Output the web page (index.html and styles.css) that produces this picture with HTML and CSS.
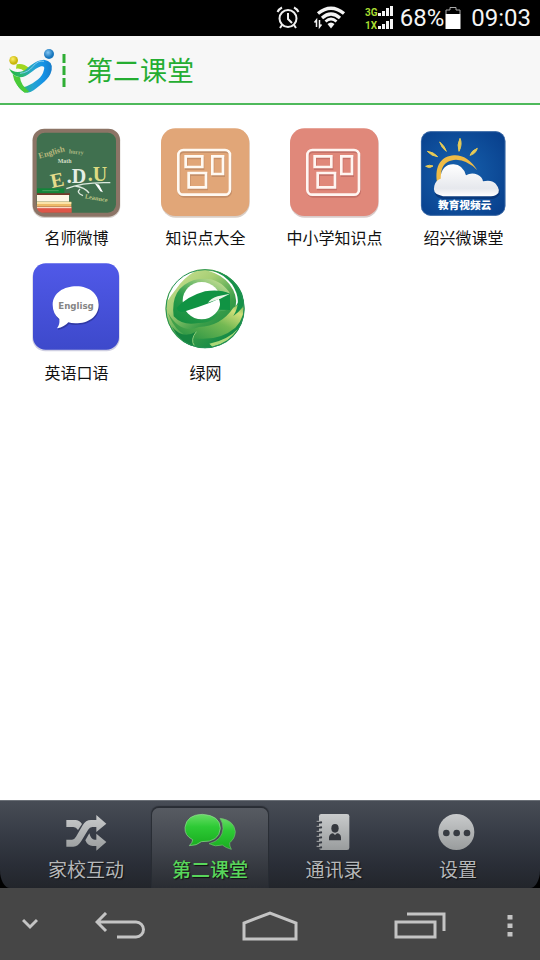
FILE: index.html
```html
<!DOCTYPE html>
<html lang="zh-CN">
<head>
  <meta charset="UTF-8">
  <meta name="viewport" content="width=device-width, initial-scale=1.0">
  <title>第二课堂</title>
  <link rel="stylesheet" href="styles.css">
</head>
<body>
  <div class="status-bar">
    <svg class="status-alarm" width="24" height="24" viewBox="0 0 24 24" fill="none" stroke="#eee" stroke-width="2">
      <circle cx="12" cy="12.500" r="8.500"/>
      <path d="M12 7v6l4 4M1.500 6Q3 3 6 1.500M22.500 6Q21 3 18 1.500M6 19l-2 3M18 19l2 3"/>
    </svg>
    <svg class="status-wifi" width="34" height="24" viewBox="0 0 34 24" fill="none" stroke="#f4f4f4">
      <path d="M5 7.500Q18 -3 31 7.500" stroke-width="3.400"/>
      <path d="M9 12Q18 4 27 12" stroke-width="3.200"/>
      <path d="M12.500 15.500Q18 10.500 23.500 15.500" stroke-width="2.800"/>
      <path d="M14.500 18Q18 15 21.500 18L18 22.500z" fill="#f4f4f4" stroke="none"/>
      <path d="M3.500 21v-7l-2 2.500M6.500 14v7l2-2.500" stroke-width="1.500"/>
    </svg>
    <svg class="status-signal" width="28" height="26" viewBox="0 0 28 26">
      <g class="signal-text"><text x="0" y="11">3G</text><text x="0" y="24">1X</text></g>
      <path fill="#f4f4f4" d="M13 8h3v3h-3zM17 6h3v5h-3zM21 3h3v8h-3zM25 1h3v10h-3zM13 21h3v3h-3zM17 19h3v5h-3zM21 16h3v8h-3zM25 14h3v10h-3z"/>
    </svg>
    <span class="battery-text">68%</span>
    <svg class="status-battery" width="16" height="24" viewBox="0 0 16 24">
      <path d="M1 8V4h4V1.500h6V4h4v4" fill="none" stroke="#aaa"/>
      <path d="M.500 8h15v15H.500z" fill="#fff"/>
    </svg>
    <time>09:03</time>
  </div>

  <header class="title-bar">
    <svg class="logo" width="48" height="48" viewBox="24 30 144 144" role="img" aria-label="logo">
      <defs>
        <linearGradient id="heart" x1="0" y1="0" x2="1" y2="0">
          <stop offset="0" stop-color="#1fb53d"/><stop offset=".300" stop-color="#2bb870"/><stop offset=".550" stop-color="#25a5d0"/><stop offset=".8" stop-color="#1592e6"/><stop offset="1" stop-color="#167cc9"/>
        </linearGradient>
        <radialGradient id="blueBall" cx=".4" cy=".35">
          <stop offset="0" stop-color="#84c6f2"/><stop offset="1" stop-color="#1876bd"/>
        </radialGradient>
        <radialGradient id="yellowBall" cx=".4" cy=".35">
          <stop offset="0" stop-color="#fff06a"/><stop offset="1" stop-color="#c9b70b"/>
        </radialGradient>
      </defs>
      <path d="M50 82Q70 77 88 94L75 104Q62 92 48 95z" fill="#a0d61f"/>
      <path d="M27 94Q45 112 72 101C92 87 105 69 132 68Q160 72 155 99C149 128 122 142 101 160Q88 170 74 166Q58 157 50 141Q66 154 80 148C105 136 128 120 131 101Q137 86 123 88C99 96 84 121 60 121Q37 118 27 94z" fill="url(#heart)"/>
      <path d="M38 112Q43 145 74 167L88 164Q62 145 60 121Q46 119 38 112z" fill="#4acb38"/>
      <path d="M60 109Q84 107 99 88T132 73" fill="none" stroke="#83cbef" stroke-width="3"/>
      <circle cx="147" cy="51" r="15" fill="url(#blueBall)"/>
      <circle cx="41" cy="70" r="13" fill="url(#yellowBall)"/>
    </svg>
    <svg class="divider" width="4" height="34" viewBox="0 0 4 34"><path d="M2 0v34" stroke="#2fae35" stroke-width="3" stroke-dasharray="9 3"/></svg>
    <h1>第二课堂</h1>
  </header>

  <main class="app-grid">
    <a class="app" href="#weibo">
      <svg class="app-icon" viewBox="36 24 270 270">
        <rect x="37" y="27" width="264" height="267" rx="36" fill="#d5cfca"/>
        <rect x="38" y="26" width="262" height="264" rx="35" fill="#8c7466"/>
        <rect x="50" y="38" width="238" height="240" rx="25" fill="#40704f"/>
        <g class="chalk">
          <text x="58" y="116" transform="rotate(-16 58 116)" font-size="25" fill="#b7b67c">English</text>
          <text x="146" y="100" transform="rotate(5 146 100)" font-size="18" fill="#a8b984">hurry</text>
          <text x="113" y="128" font-size="18" fill="#d4dfc8">Math</text>
          <text x="96" y="204" transform="rotate(-12 96 204)" font-size="60" fill="#e4dc8b">E</text>
          <text x="140" y="188" font-size="60" fill="#e5eee5">.D</text>
          <text x="203" y="182" font-size="60" fill="#dcdb81">.U</text>
          <text x="194" y="235" transform="rotate(10 194 235)" font-size="19" fill="#bfc785">Leannce</text>
        </g>
        <path d="M139 206Q190 185 271 188M166 198Q194 202 207 219M180 207q-13 11 9 20" fill="none" stroke="#dce9de" stroke-width="4"/>
        <path d="M224 190l13 4 12 23-8-3z" fill="#fff"/>
        <path d="M51 205h82v15H51z" fill="#138438"/><path d="M67 212h49" stroke="#67b276" stroke-width="2"/>
        <path d="M51 220h99v5H51z" fill="#733928"/><path d="M51 225h96v20H51z" fill="#fff6e5"/>
        <path d="M51 245h103v15H51z" fill="#edba68"/><path d="M51 249h103" stroke="#fff0bf" stroke-width="4"/>
        <path d="M51 260h104v18H66Q54 276 51 264z" fill="#df5548"/><path d="M51 263h103" stroke="#fff2db" stroke-width="3"/>
      </svg>
      <span>名师微博</span>
    </a>
    <a class="app" href="#knowledge">
      <svg class="app-icon" viewBox="33 24 270 270">
        <rect x="34" y="28" width="265" height="265" rx="43" fill="#d9cec6"/>
        <rect x="33" y="25" width="265" height="263" rx="43" fill="#e1a678"/>
        <g fill="none" stroke="#c58f68" stroke-width="8" transform="translate(2 5)"><rect x="85" y="90" width="155" height="134" rx="15"/><path d="M107 109h50v32h-50zM187 109h32v53h-32zM116 159h52v43h-52z"/></g>
        <g fill="none" stroke="#fff9f2" stroke-width="8"><rect x="85" y="90" width="155" height="134" rx="15"/><path d="M107 109h50v32h-50zM187 109h32v53h-32zM116 159h52v43h-52z"/></g>
      </svg>
      <span>知识点大全</span>
    </a>
    <a class="app" href="#school">
      <svg class="app-icon" viewBox="30 24 270 270">
        <rect x="31" y="28" width="265" height="265" rx="43" fill="#d9cbca"/>
        <rect x="30" y="25" width="265" height="263" rx="43" fill="#e0887a"/>
        <g fill="none" stroke="#c57168" stroke-width="8" transform="translate(2 5)"><rect x="82" y="90" width="155" height="134" rx="15"/><path d="M104 109h50v32h-50zM184 109h32v53h-32zM113 159h52v43h-52z"/></g>
        <g fill="none" stroke="#fff5f1" stroke-width="8"><rect x="82" y="90" width="155" height="134" rx="15"/><path d="M104 109h50v32h-50zM184 109h32v53h-32zM113 159h52v43h-52z"/></g>
      </svg>
      <span>中小学知识点</span>
    </a>
    <a class="app" href="#shaoxing">
      <svg class="app-icon" viewBox="27 24 270 270">
        <defs>
          <radialGradient id="sky" cx=".45" cy=".5" r=".7"><stop offset="0" stop-color="#1762ae"/><stop offset="1" stop-color="#083f8c"/></radialGradient>
          <linearGradient id="cloud" x1="0" y1="0" x2="0" y2="1"><stop offset="0" stop-color="#fff"/><stop offset=".75" stop-color="#e6e8ed"/><stop offset="1" stop-color="#fff"/></linearGradient>
        </defs>
        <rect x="33" y="34" width="253" height="253" rx="29" fill="url(#sky)"/>
        <rect x="34" y="35" width="251" height="251" rx="28" fill="none" stroke="#4e79af" stroke-width="2"/>
        <path d="M81 187C73 135 96 108 132 106Q172 104 202 151Q172 119 138 119C99 121 89 150 96 177z" fill="#eebb46"/>
        <path d="M89 66Q104 77 109 94Q95 85 89 66zM150 55Q158 72 147 94Q140 75 150 55zM202 85Q197 102 180 106Q185 91 202 85zM52 94Q71 96 83 110Q65 109 52 94zM47 139Q58 133 69 138Q59 147 47 139z" fill="#e6ca57" stroke="#e6ca57" stroke-width="3"/>
        <path d="M88 229Q67 223 73 197Q77 181 92 176C92 145 110 132 131 133Q158 134 168 166Q184 156 203 164Q217 170 219 184Q244 178 257 191Q276 214 259 224Q252 231 235 231H99z" fill="#062c67" transform="translate(3 6)" opacity=".6"/>
        <path d="M88 225Q67 219 73 197Q77 181 92 176C92 145 110 132 131 133Q158 134 168 166Q184 156 203 164Q217 170 219 184Q244 178 257 191Q276 214 259 224Q252 229 235 229H99z" fill="url(#cloud)"/>
        <text class="cloud-text" x="164" y="267" text-anchor="middle">教育视频云</text>
      </svg>
      <span>绍兴微课堂</span>
    </a>
    <a class="app" href="#english">
      <svg class="app-icon" viewBox="36 24 270 270">
        <defs><linearGradient id="talk" x1="0" y1="0" x2="0" y2="1"><stop offset="0" stop-color="#5059e8"/><stop offset="1" stop-color="#3d49cb"/></linearGradient></defs>
        <rect x="37" y="29" width="262" height="260" rx="39" fill="#cfcfe2"/>
        <rect x="39" y="25" width="258" height="259" rx="38" fill="url(#talk)"/>
        <path d="M118 192Q98 176 98 149C99 113 132 94 169 94C209 94 236 118 236 149C236 184 206 205 166 205Q154 205 145 202Q134 216 111 220Q120 209 118 192z" fill="#3039a5" transform="translate(2 5)"/>
        <path d="M118 192Q98 176 98 149C99 113 132 94 169 94C209 94 236 118 236 149C236 184 206 205 166 205Q154 205 145 202Q134 216 111 220Q120 209 118 192z" fill="#fff"/>
        <text class="english-text" x="168" y="162" text-anchor="middle">Englisg</text>
      </svg>
      <span>英语口语</span>
    </a>
    <a class="app" href="#green">
      <svg class="app-icon" viewBox="33 24 270 270">
        <defs>
          <linearGradient id="globe" x1="0" y1="0" x2=".8" y2="1"><stop offset="0" stop-color="#d5e69b"/><stop offset=".35" stop-color="#a6ce74"/><stop offset=".65" stop-color="#3a9d48"/><stop offset="1" stop-color="#078445"/></linearGradient>
          <linearGradient id="letter" x1="0" y1="1" x2=".7" y2="0"><stop offset="0" stop-color="#128b3d"/><stop offset=".5" stop-color="#2c9d4c"/><stop offset="1" stop-color="#b9d98d"/></linearGradient>
          <linearGradient id="swoosh" x1="0" y1="1" x2="1" y2="0"><stop offset="0" stop-color="#178b41"/><stop offset=".55" stop-color="#74b953"/><stop offset=".8" stop-color="#d1df79"/><stop offset="1" stop-color="#4ca64c"/></linearGradient>
        </defs>
        <circle cx="165" cy="161" r="119" fill="url(#globe)"/>
        <path d="M53 137Q62 62 138 47Q101 68 79 101Q65 118 53 137z" fill="#fff"/>
        <path d="M71 184Q60 99 132 75Q201 58 238 112L239 162Q223 168 210 169Q193 205 145 204Q99 214 71 184z" fill="url(#letter)"/>
        <path d="M54 173Q92 239 147 216Q213 213 250 158L280 138Q289 183 256 218Q211 256 145 251Q78 245 54 173z" fill="url(#swoosh)"/>
        <ellipse cx="155" cy="137" rx="57" ry="56" fill="#fff"/>
        <path d="M80 159Q111 124 165 109Q208 101 240 116Q214 128 180 143Q143 157 110 167Q87 178 80 159z" fill="#109343"/>
        <path d="M206 130L240 116V165L207 164Q214 149 206 130z" fill="#109343"/>
        <path d="M203 124L240 116L211 131Q190 137 174 143Q181 131 203 124z" fill="#e8f5e6"/>
        <path d="M66 215Q98 254 138 230Q120 258 131 274Q89 263 66 215z" fill="#16843f"/>
        <path d="M139 230Q120 254 133 272" fill="none" stroke="#8ccb77" stroke-width="3"/>
        <path d="M178 266Q231 257 266 220Q240 264 187 275z" fill="#acd878"/>
        <path d="M174 47Q247 56 270 110Q276 129 257 154Q264 121 238 87Q216 59 174 47z" fill="#fff"/>
        <path d="M184 45Q252 60 276 115Q284 138 278 157Q265 173 250 183Q279 139 246 88Q221 57 184 45z" fill="#159148"/>
        <circle cx="165" cy="161" r="117" fill="none" stroke="#249256" stroke-width="3"/>
      </svg>
      <span>绿网</span>
    </a>
  </main>

  <!-- svg gradient shared by the grey tab icons -->
  <svg class="defs" width="0" height="0">
    <linearGradient id="silver" x1="0" y1="0" x2="0" y2="1"><stop offset="0" stop-color="#c9cbcc"/><stop offset="1" stop-color="#999c9d"/></linearGradient>
    <linearGradient id="bubble" x1="0" y1="0" x2="0" y2="1"><stop offset="0" stop-color="#68dc66"/><stop offset=".4" stop-color="#2dca35"/><stop offset="1" stop-color="#19ad20"/></linearGradient>
  </svg>

  <div class="tab-wrap">
    <nav class="tab-bar">
      <a class="tab" href="#home">
        <svg width="52" height="38" viewBox="0 0 156 114">
          <path d="M19 21H46Q58 21 66 33L54 51Q48 42 40 42H19zM19 80H36Q43 80 48 71L68 37Q77 21 93 21H109V6L139 32L109 57V42H97Q89 42 84 51L64 84Q54 101 40 101H19zM88 61Q93 80 104 80H109V62L139 87L109 113V99H98Q83 99 76 82z" fill="url(#silver)"/>
        </svg>
        <span>家校互动</span>
      </a>
      <a class="tab active" href="#class" aria-current="page">
        <svg width="52" height="38" viewBox="0 0 156 114">
          <path d="M108 16Q150 21 154 56Q153 77 137 89Q136 99 142 109Q124 104 115 96Q94 103 75 92Q115 82 117 47Q117 29 108 16z" fill="url(#bubble)" stroke="#73bd73" stroke-width="2"/>
          <path d="M55 4Q108 7 109 46Q106 88 52 86Q39 98 16 98Q26 88 26 80Q1 68 3 43Q8 5 55 4z" fill="url(#bubble)" stroke="#91d991" stroke-width="2"/>
        </svg>
        <span>第二课堂</span>
      </a>
      <a class="tab" href="#contacts">
        <svg width="52" height="38" viewBox="0 0 156 114">
          <rect x="33" y="3" width="91" height="108" rx="7" fill="url(#silver)"/>
          <path d="M29 28h10M29 43h10M29 58h10M29 73h10M29 88h10M29 103h10" stroke="#343840" stroke-width="7" stroke-linecap="round"/>
          <path d="M27 25h9M27 40h9M27 55h9M27 70h9M27 85h9M27 100h9" stroke="#a7a9aa" stroke-width="3" stroke-linecap="round"/>
          <ellipse cx="81" cy="46" rx="11" ry="13" fill="#34373d"/><path d="M63 82V72Q66 61 75 61L81 66L87 61Q98 62 99 73V82z" fill="#34373d"/>
        </svg>
        <span>通讯录</span>
      </a>
      <a class="tab" href="#settings">
        <svg width="52" height="38" viewBox="0 0 156 114">
          <circle cx="73" cy="57" r="54" fill="url(#silver)"/><g fill="#373b42"><circle cx="43" cy="60" r="10"/><circle cx="74" cy="60" r="10"/><circle cx="105" cy="60" r="10"/></g>
        </svg>
        <span>设置</span>
      </a>
    </nav>
  </div>

  <div class="system-nav">
    <button class="nav-hide" aria-label="隐藏"><svg width="16" height="12" viewBox="0 0 16 12"><path d="M1 2l7 7 7-7"/></svg></button>
    <button aria-label="返回"><svg width="50" height="28" viewBox="0 0 50 28"><path d="M11 1L2 10l9 9M3 10h38a7.500 7.500 0 0 1 0 15H22"/></svg></button>
    <button aria-label="主页"><svg width="56" height="30" viewBox="0 0 56 30"><path d="M2 28V12L28 2l26 10v16z"/></svg></button>
    <button aria-label="最近任务"><svg width="52" height="28" viewBox="0 0 52 28"><path d="M2 10h39v15H2zM13 2h37v17"/></svg></button>
    <button class="nav-more" aria-label="菜单"><svg width="16" height="22" viewBox="0 0 16 22"><path d="M8 0v22" stroke-dasharray="4.500 4"/></svg></button>
  </div>
</body>
</html>
```
FILE: styles.css
```css
* {
  box-sizing: border-box;
}
body {
  display: flex;
  flex-direction: column;
  min-height: 100vh;
  margin: 0;
  background: #fff;
  color: #111;
  font-family: Roboto, "Noto Sans CJK SC", sans-serif;
}
a {
  color: inherit;
  text-decoration: none;
}
svg {
  display: block;
  flex: none;
}
.defs {
  position: absolute;
}

/* status bar */
.status-bar {
  display: flex;
  align-items: center;
  justify-content: flex-end;
  height: 36px;
  padding-right: 9px;
  background: #000;
  color: #f4f4f4;
  font-size: 24px;
  line-height: 36px;
}
.status-wifi {
  margin-left: 13px;
}
.status-signal {
  margin: 0 7px 0 18px;
}
.status-battery {
  margin: 0 10px 0 1px;
}
.signal-text {
  fill: #a8dc32;
  font-family: Roboto, sans-serif;
  font-size: 10px;
  font-weight: bold;
}

/* title */
.title-bar {
  display: flex;
  align-items: center;
  height: 69px;
  padding: 2px 8px 0;
  background: #f7f7f7;
  border-bottom: 2px solid #4eb95b;
}
.divider {
  margin-left: 6px;
}
h1 {
  margin: 0 0 0 20px;
  padding-top: 2px;
  color: #24ad31;
  font-size: 27px;
  font-weight: normal;
  line-height: 36px;
}

/* apps */
.app-grid {
  display: grid;
  flex: 1;
  grid-template-columns: repeat(4, 1fr);
  align-content: start;
  row-gap: 12px;
  padding: 23px 12px;
}
.app {
  display: flex;
  flex-direction: column;
  align-items: center;
  gap: 9px;
  font-size: 16px;
  line-height: 24px;
  white-space: nowrap;
}
.app-icon {
  width: 90px;
  height: 90px;
}
.chalk {
  font-family: "Liberation Serif", serif;
  font-weight: bold;
}
.cloud-text {
  fill: #fff;
  font-family: "Noto Sans CJK SC", sans-serif;
  font-size: 32px;
  font-weight: 900;
}
.english-text {
  fill: #858585;
  font-family: "DejaVu Sans", sans-serif;
  font-size: 26px;
  font-weight: bold;
}

/* bottom tabs */
.tab-wrap {
  background: #000;
}
.tab-bar {
  display: grid;
  grid-template-columns: repeat(4, 1fr);
  gap: 8px;
  height: 88px;
  padding: 7px 24px 0 28px;
  border-top: 1px solid #6b7077;
  border-radius: 0 0 10px 10px / 0 0 18px 18px;
  background: linear-gradient(#474c55, #363b45 40%, #292d36 75%, #22252b);
}
.tab {
  display: flex;
  flex-direction: column;
  align-items: center;
  padding-top: 5px;
  border-radius: 7px 7px 0 0;
  color: #b5b7b9;
  font-size: 19px;
  line-height: 26px;
  text-shadow: 1px 1px 1px #111;
}
.tab span {
  margin-top: 7px;
}
.tab.active {
  background: linear-gradient(#575b62, #41454d 50%, #292c32);
  box-shadow: 0 -1px 1px 1px #292d34;
  color: #58d65b;
  font-weight: 500;
}

/* system buttons */
.system-nav {
  display: grid;
  grid-template-columns: 3fr 10fr 10fr 10fr 3fr;
  height: 72px;
  background: #464646;
}
.system-nav button {
  display: flex;
  align-items: center;
  justify-content: center;
  padding: 4px 0 0;
  border: 0;
  background: none;
}
.system-nav path {
  fill: none;
  stroke: #c4c4c4;
  stroke-width: 3;
}
.system-nav .nav-hide {
  justify-content: flex-end;
  padding: 0 7px 0 0;
}
.system-nav .nav-more {
  justify-content: flex-start;
  padding: 4px 0 0 7px;
}
.system-nav .nav-more path {
  stroke-width: 5;
}
```
